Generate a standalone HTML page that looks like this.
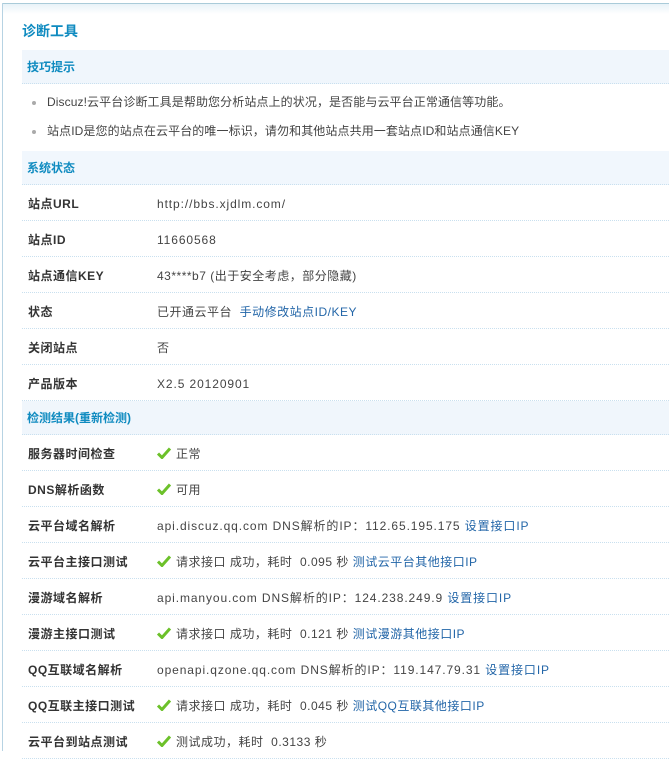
<!DOCTYPE html>
<html><head><meta charset="utf-8"><style>
*{margin:0;padding:0;box-sizing:border-box}
body{width:669px;height:751px;overflow:hidden;background:#fff;font:12px "Liberation Sans","Noto Sans CJK SC",sans-serif;color:#333;position:relative}
.lb{position:absolute;left:2px;top:3px;bottom:0;width:1px;background:#b7d3e3}
.tb{position:absolute;left:2px;right:0;top:3px;height:1px;background:#a9cbd9}
.grad{position:absolute;left:3px;right:0;top:4px;height:10px;background:linear-gradient(#e8f2f8,#fff)}
h1{position:absolute;left:22px;top:21px;font-size:14px;color:#0f8bc0;font-weight:bold}
.wrap{position:absolute;left:22px;right:0;top:50px}
.sh{height:34px;line-height:34px;background:#f0f6fc;border-bottom:1px dotted #c9e0ef;padding-left:5px;font-weight:bold;color:#0f8bc0;font-size:12px}
.tip{height:29px;line-height:29px;padding-left:25px;position:relative;color:#444;letter-spacing:0.1px}
.tip:before{content:"";position:absolute;left:10px;top:13px;width:4px;height:4px;border-radius:2px;background:#aaa}
.r{height:36px;line-height:35px;border-bottom:1px dotted #c9e0ef;position:relative;color:#444}
.r b{position:absolute;left:6px;top:2px;color:#333;letter-spacing:0.5px}
.r span{position:absolute;left:135px;top:2px;letter-spacing:0.5px;white-space:nowrap}
.r span.l{letter-spacing:0.9px}
a{color:#2366a8;text-decoration:none}
.ck{display:inline-block;width:14px;height:12px;vertical-align:-1px;margin-right:5px}
</style></head><body>
<div class="tb"></div><div class="grad"></div><div class="lb"></div>
<h1>诊断工具</h1>
<div class="wrap">
<div class="sh">技巧提示</div>
<div style="height:4px"></div>
<div class="tip">Discuz!云平台诊断工具是帮助您分析站点上的状况，是否能与云平台正常通信等功能。</div>
<div class="tip">站点ID是您的站点在云平台的唯一标识，请勿和其他站点共用一套站点ID和站点通信KEY</div>
<div style="height:5px"></div>
<div class="sh" style="background:#f1f7fd">系统状态</div>
<div class="r"><b>站点URL</b><span class="l">http://bbs.xjdlm.com/</span></div>
<div class="r"><b>站点ID</b><span class="l">11660568</span></div>
<div class="r"><b>站点通信KEY</b><span>43****b7 (出于安全考虑，部分隐藏)</span></div>
<div class="r"><b>状态</b><span>已开通云平台 &nbsp;<a>手动修改站点ID/KEY</a></span></div>
<div class="r"><b>关闭站点</b><span>否</span></div>
<div class="r"><b>产品版本</b><span class="l">X2.5 20120901</span></div>
<div class="sh">检测结果(重新检测)</div>
<div class="r"><b>服务器时间检查</b><span><svg class="ck" viewBox="0 0 14 12"><path d="M1 6.5L5 10.5L13 1.5" fill="none" stroke="#6cc12a" stroke-width="3"/></svg>正常</span></div>
<div class="r"><b>DNS解析函数</b><span><svg class="ck" viewBox="0 0 14 12"><path d="M1 6.5L5 10.5L13 1.5" fill="none" stroke="#6cc12a" stroke-width="3"/></svg>可用</span></div>
<div class="r"><b>云平台域名解析</b><span class="l">api.discuz.qq.com DNS解析的IP：112.65.195.175 <a>设置接口IP</a></span></div>
<div class="r"><b>云平台主接口测试</b><span><svg class="ck" viewBox="0 0 14 12"><path d="M1 6.5L5 10.5L13 1.5" fill="none" stroke="#6cc12a" stroke-width="3"/></svg>请求接口 成功，耗时 &nbsp;0.095 秒 <a>测试云平台其他接口IP</a></span></div>
<div class="r"><b>漫游域名解析</b><span class="l">api.manyou.com DNS解析的IP：124.238.249.9 <a>设置接口IP</a></span></div>
<div class="r"><b>漫游主接口测试</b><span><svg class="ck" viewBox="0 0 14 12"><path d="M1 6.5L5 10.5L13 1.5" fill="none" stroke="#6cc12a" stroke-width="3"/></svg>请求接口 成功，耗时 &nbsp;0.121 秒 <a>测试漫游其他接口IP</a></span></div>
<div class="r"><b>QQ互联域名解析</b><span class="l">openapi.qzone.qq.com DNS解析的IP：119.147.79.31 <a>设置接口IP</a></span></div>
<div class="r"><b>QQ互联主接口测试</b><span><svg class="ck" viewBox="0 0 14 12"><path d="M1 6.5L5 10.5L13 1.5" fill="none" stroke="#6cc12a" stroke-width="3"/></svg>请求接口 成功，耗时 &nbsp;0.045 秒 <a>测试QQ互联其他接口IP</a></span></div>
<div class="r"><b>云平台到站点测试</b><span><svg class="ck" viewBox="0 0 14 12"><path d="M1 6.5L5 10.5L13 1.5" fill="none" stroke="#6cc12a" stroke-width="3"/></svg>测试成功，耗时 &nbsp;0.3133 秒</span></div>
</div>
</body></html>
